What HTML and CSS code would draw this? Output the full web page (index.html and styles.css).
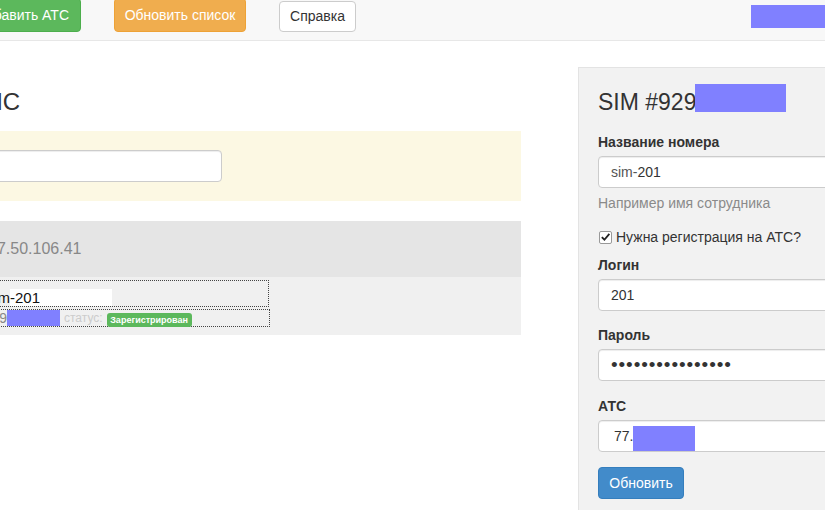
FILE: index.html
```html
<!DOCTYPE html>
<html lang="ru">
<head>
<meta charset="utf-8">
<title>SIM</title>
<link rel="stylesheet" href="styles.css">
</head>
<body>
<header class="navbar">
  <button class="btn btn-success">Добавить АТС</button>
  <button class="btn btn-warning">Обновить список</button>
  <button class="btn btn-default">Справка</button>
  <span class="spacer"></span>
  <span class="mask mask-user"></span>
</header>
<main class="main">
  <section class="left">
    <h3 class="page-title"><span>Список СИМ и ИС</span></h3>
    <div class="filter">
      <input class="form-control filter-input" type="text">
    </div>
    <div class="pbx-head"><span>77.50.106.41</span></div>
    <div class="pbx-body">
      <div class="sim-line sim-name"><span class="pre">sim</span><span class="name-field">-201</span></div>
      <div class="sim-line sim-status"><span class="num">79</span><span class="mask mask-num"></span><span class="status-word">статус:</span><span class="label-ok">Зарегистрирован</span></div>
    </div>
  </section>
  <aside class="panel">
    <h3 class="panel-title">SIM #929<span class="mask mask-title"></span></h3>
    <label class="ctl-label">Название номера</label>
    <div class="form-control"><span class="muted-txt">sim-</span>201</div>
    <p class="help">Например имя сотрудника</p>
    <label class="check"><span class="box"><svg viewBox="0 0 12 12" width="12" height="12"><path d="M2 6.2 L4.8 9 L10.2 2.6" fill="none" stroke="#222" stroke-width="2"/></svg></span>Нужна регистрация на АТС?</label>
    <label class="ctl-label">Логин</label>
    <div class="form-control">201</div>
    <label class="ctl-label gap">Пароль</label>
    <div class="form-control dots">••••••••••••••••</div>
    <label class="ctl-label gap gap-ats">АТС</label>
    <div class="form-control ats">77.<span class="mask mask-ats"></span></div>
    <button class="btn btn-primary">Обновить</button>
  </aside>
</main>
</body>
</html>
```
FILE: styles.css
```css
* { box-sizing: border-box; }
html, body { margin: 0; height: 100%; }
body {
  overflow: hidden;
  background: #fff;
  font-family: "Liberation Sans", Arial, sans-serif;
  font-size: 14px;
  color: #333;
  width: 825px;
}
.navbar {
  height: 41px;
  background: #f8f8f8;
  border-bottom: 1px solid #e7e7e7;
  display: flex;
  align-items: flex-start;
  margin-left: -30px;
  gap: 33px;
}
.btn {
  font: inherit;
  font-size: 14px;
  height: 34px;
  padding: 0 12px;
  border: 1px solid transparent;
  border-radius: 4px;
  color: #fff;
  line-height: 32px;
  white-space: nowrap;
  cursor: pointer;
}
.navbar .btn { margin-top: -2px; }
.btn-success { background: #5cb85c; border-color: #4cae4c; width: 111px; padding: 0 11px 0 0; text-align: right; }
.btn-warning { background: #f0ad4e; border-color: #eea236; width: 132px; padding: 0; }
.navbar .btn-default {
  background: #fff; border-color: #ccc; color: #333; width: 77px; padding: 0;
  margin-top: 1px; height: 31px; line-height: 29px;
}
.spacer { flex: 1; }
.mask { display: inline-block; background: #8080ff; }
.mask-user { width: 74px; height: 23px; margin-top: 5px; }

.main {
  display: flex;
  align-items: flex-start;
  margin-left: -30px;
}
.left {
  width: 551px;
  flex: none;
}
.page-title {
  margin: 48px 0 16px;
  width: 50px;
  display: flex;
  justify-content: flex-end;
  white-space: nowrap;
  font-size: 24px;
  font-weight: 400;
  line-height: 26px;
  color: #333;
}
.filter {
  background: #fcf8e3;
  height: 70px;
  padding: 19px 0 0 0;
  margin-bottom: 20px;
}
.form-control {
  display: block;
  height: 32px;
  border: 1px solid #ccc;
  border-radius: 4px;
  background: #fff;
  font: inherit;
  color: #555;
  padding: 0 12px;
  line-height: 30px;
  box-shadow: inset 0 1px 1px rgba(0,0,0,.075);
}
.filter-input { width: 252px; }
.pbx-head {
  background: #e5e5e5;
  height: 56px;
  padding-left: 18px;
  line-height: 56px;
  font-size: 16px;
  color: #888;
}
.pbx-body {
  background: #f0f0f0;
  height: 58px;
  padding: 3px 0 0 0;
}
.sim-line {
  border: 1px dotted #444;
  width: 299px;
  display: flex;
  align-items: flex-end;
  padding-left: 8px;
}
.sim-name {
  height: 27px;
  font-size: 15px;
  color: #111;
  line-height: 17px;
}
.pre { width: 31px; text-align: right; display: inline-block; }
.name-field {
  background: #fff;
  width: 102px;
  display: inline-block;
  height: 17px;
}
.sim-status {
  margin-top: 2px;
  height: 18px;
  width: 300px;
  align-items: center;
  font-size: 14px;
  line-height: 16px;
  padding-left: 20px;
}
.num { color: #888; width: 16px; text-align: right; }
.mask-num { width: 53px; height: 16px; }
.status-word { color: #ccc; margin-left: 4px; font-size: 12px; }
.label-ok {
  margin-left: 4px;
  background: #5cb85c;
  color: #fff;
  font-size: 9px;
  font-weight: 700;
  height: 14px;
  line-height: 14px;
  padding: 0 3px;
  border-radius: 3px;
  width: 85px;
  text-align: center;
  white-space: nowrap;
  margin-top: 3px;
}

.panel {
  margin-left: 57px;
  margin-top: 26px;
  width: 300px;
  flex: none;
  height: 470px;
  background: #f2f2f2;
  border: 1px solid #e3e3e3;
  padding: 20px 0 0 19px;
}
.panel-title {
  margin: 0 0 16px;
  font-size: 23px;
  font-weight: 400;
  line-height: 28px;
  height: 28px;
  display: flex;
  align-items: flex-start;
  color: #333;
}
.mask-title { width: 91px; height: 28px; margin-top: -4px; margin-left: -1px; }
.ctl-label {
  display: block;
  font-weight: 700;
  font-size: 14px;
  line-height: 20px;
  margin-bottom: 4px;
}
.panel .form-control { width: 260px; color: #333; }
.muted-txt { color: #555; }
.help { margin: 5px 0 0; color: #8a8a8a; line-height: 20px; font-size: 14px; }
.check {
  display: flex;
  align-items: center;
  gap: 4px;
  margin-top: 14px;
  line-height: 20px;
  margin-bottom: 8px;
}
.box {
  width: 13px; height: 13px;
  border: 1px solid #999;
  border-radius: 2px;
  background: #fff;
  display: inline-flex; align-items: center; justify-content: center;
  margin-left: 1px;
}
.gap { margin-top: 14px; }
.gap-ats { margin-top: 15px; }
.dots { font-size: 19px; letter-spacing: 0.9px; color: #444; line-height: 30px; overflow: hidden; }
.ats { padding-left: 15px; display: flex; align-items: flex-end; }
.mask-ats { width: 62px; height: 25px; }
.btn-primary {
  margin-top: 15px;
  background: #428bca;
  border-color: #357ebd;
  width: 86px;
  height: 32px;
  line-height: 30px;
  padding: 0;
}
```
